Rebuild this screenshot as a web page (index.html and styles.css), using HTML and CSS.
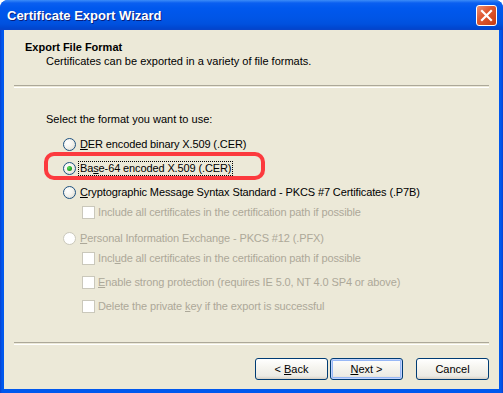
FILE: index.html
```html
<!DOCTYPE html>
<html lang="en">
<head>
    <meta charset="UTF-8">
    <title>Certificate Export Wizard</title>
    <link rel="stylesheet" href="styles.css">
</head>
<body>

    <div class="window">
        <div class="titlebar">
            <span class="title">Certificate Export Wizard</span>
            <span class="close-button">
                <svg width="13" height="13" viewBox="0 0 13 13">
                    <path d="M2 2 L11 11 M11 2 L2 11" stroke="#ffffff" stroke-width="2.2" stroke-linecap="square" fill="none"/>
                </svg>
            </span>
        </div>

        <div class="client">
            <div class="header">
                <div class="heading">Export File Format</div>
                <div class="subheading">Certificates can be exported in a variety of file formats.</div>
            </div>
            <div class="separator"></div>

            <div class="page">
                <div class="prompt">Select the format you want to use:</div>

                <div class="option radio-option first">
                    <span class="radio"></span>
                    <span class="label"><u>D</u>ER encoded binary X.509 (.CER)</span>
                </div>
                <div class="option radio-option">
                    <span class="highlight"></span>
                    <span class="radio checked"></span>
                    <span class="label focused">Ba<u>s</u>e-64 encoded X.509 (.CER)</span>
                </div>
                <div class="option radio-option">
                    <span class="radio"></span>
                    <span class="label"><u>C</u>ryptographic Message Syntax Standard - PKCS #7 Certificates (.P7B)</span>
                </div>
                <div class="option check-option after-radio disabled">
                    <span class="checkbox"></span>
                    <span class="label">Include all certificates in the certification path if possible</span>
                </div>

                <div class="option radio-option after-check disabled">
                    <span class="radio"></span>
                    <span class="label"><u>P</u>ersonal Information Exchange - PKCS #12 (.PFX)</span>
                </div>
                <div class="option check-option after-radio disabled">
                    <span class="checkbox"></span>
                    <span class="label">Incl<u>u</u>de all certificates in the certification path if possible</span>
                </div>
                <div class="option check-option disabled">
                    <span class="checkbox"></span>
                    <span class="label"><u>E</u>nable strong protection (requires IE 5.0, NT 4.0 SP4 or above)</span>
                </div>
                <div class="option check-option disabled">
                    <span class="checkbox"></span>
                    <span class="label">Delete the private <u>k</u>ey if the export is successful</span>
                </div>
            </div>

            <div class="footer">
                <div class="separator"></div>
                <div class="buttons">
                    <button class="button">&lt; <u>B</u>ack</button>
                    <button class="button default"><u>N</u>ext &gt;</button>
                    <button class="button cancel">Cancel</button>
                </div>
            </div>
        </div>
    </div>

</body>
</html>
```

FILE: styles.css
```css
body {
    margin: 0;
    background-color: #ffffff;
    font-family: "Liberation Sans", Arial, sans-serif;
    font-size: 11px;
    color: #000000;
}

.window {
    width: 503px;
    height: 393px;
    display: flex;
    flex-direction: column;
    border-radius: 8px 8px 0 0;
    background: linear-gradient(to right, #0841d0 0, #0058ee 2px, #0058ee 501px, #0841d0 503px);
    overflow: hidden;
}

.titlebar {
    height: 30px;
    display: flex;
    align-items: center;
    justify-content: space-between;
    padding: 0 6px 0 7px;
    box-sizing: border-box;
    background: linear-gradient(to bottom, #3c8cf8 0, #0a5ff0 3px, #0058ee 8px, #0055e6 18px, #0051de 24px, #0047d0 28px, #0843c8 30px);
}

.title {
    font-family: "Liberation Sans", Arial, sans-serif;
    font-weight: bold;
    font-size: 13px;
    color: #ffffff;
    text-shadow: 1px 1px 0 #0a1e7a;
    padding-top: 1px;
}

.close-button {
    width: 19px;
    height: 19px;
    margin-top: 1px;
    display: flex;
    align-items: center;
    justify-content: center;
    border: 1px solid #ffffff;
    border-radius: 3px;
    background: linear-gradient(135deg, #ec8f72 0, #e05a32 40%, #c73b12 100%);
}

.client {
    flex: 1;
    margin: 0 4px 4px 4px;
    background-color: #ece9d8;
    display: flex;
    flex-direction: column;
}

.header {
    padding: 11px 0 0 21px;
}

.heading {
    font-weight: bold;
    line-height: 13px;
}

.subheading {
    line-height: 13px;
    margin-top: 1px;
    padding-left: 21px;
}

.separator {
    margin: 0 10px;
    height: 1px;
    border-top: 1px solid #aca899;
    border-bottom: 1px solid #ffffff;
    background-color: #ece9d8;
}

.header + .separator {
    margin-top: 17px;
}

.page {
    padding-left: 42px;
}

.prompt {
    line-height: 13px;
    margin-top: 25px;
}

.option {
    position: relative;
    display: flex;
    align-items: center;
    height: 16px;
    margin-top: 8px;
}

.option.first {
    margin-top: 10px;
}

.radio-option {
    padding-left: 17px;
}

.check-option {
    padding-left: 36px;
}

.option.after-radio {
    margin-top: 4px;
}

.option.after-check {
    margin-top: 10px;
}

.option.disabled {
    color: #aca899;
}

.radio {
    width: 11px;
    height: 11px;
    border: 1px solid #1c5180;
    border-radius: 50%;
    background: radial-gradient(circle at 35% 35%, #ffffff 0, #f4f3ee 45%, #d8d6cb 100%);
    display: flex;
    align-items: center;
    justify-content: center;
    margin-right: 4px;
    flex-shrink: 0;
}

.radio.checked::after {
    content: "";
    width: 5px;
    height: 5px;
    border-radius: 50%;
    background: radial-gradient(circle at 35% 35%, #5fe05f 0, #21a121 60%, #1a7d1a 100%);
}

.disabled .radio {
    border-color: #cac8bb;
    background: #ffffff;
}

.checkbox {
    width: 11px;
    height: 11px;
    border: 1px solid #cac8bb;
    background-color: #ffffff;
    margin-right: 3px;
    flex-shrink: 0;
}

.label {
    white-space: nowrap;
    line-height: 13px;
    letter-spacing: -0.12px;
}

.label u {
    text-decoration: underline;
    text-underline-offset: 1px;
}

.label.focused {
    outline: 1px dotted #000000;
    outline-offset: 0;
    padding: 0 1px;
    margin-left: -1px;
}

.highlight {
    position: absolute;
    left: -2px;
    top: -8px;
    width: 213px;
    height: 20px;
    border: 4px solid #fc3a3e;
    border-radius: 10px;
}

.footer {
    margin-top: auto;
}

.buttons {
    display: flex;
    justify-content: flex-end;
    padding: 13px 10px 9px 0;
    gap: 2px;
}

.button {
    width: 73px;
    height: 22px;
    padding: 0;
    font-family: "Liberation Sans", Arial, sans-serif;
    font-size: 11px;
    color: #000000;
    border: 1px solid #003c74;
    border-radius: 3px;
    background: linear-gradient(to bottom, #ffffff 0, #f6f5f0 40%, #ecebe5 85%, #d6d0c5 100%);
}

.button.default {
    box-shadow: inset 0 0 0 1px #c3d4fd, inset 0 0 0 2px #98b8f6;
}

.button.cancel {
    margin-left: 11px;
}
```
